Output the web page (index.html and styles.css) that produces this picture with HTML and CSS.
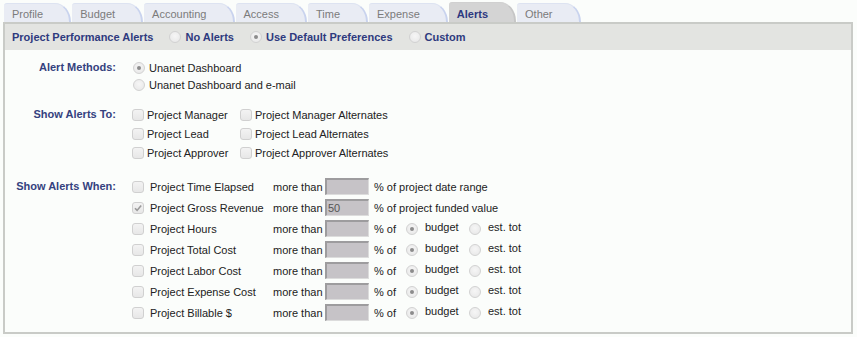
FILE: index.html
```html
<!DOCTYPE html>
<html>
<head>
<meta charset="utf-8">
<link rel="stylesheet" href="styles.css">
</head>
<body>
<div class="page">
  <nav class="tabs">
    <span class="tab">Profile</span>
    <span class="tab">Budget</span>
    <span class="tab">Accounting</span>
    <span class="tab">Access</span>
    <span class="tab">Time</span>
    <span class="tab">Expense</span>
    <span class="tab active">Alerts</span>
    <span class="tab">Other</span>
  </nav>
  <div class="panel">
    <div class="panel-head">
      <span class="head-title">Project Performance Alerts</span>
      <span class="head-opt"><span class="radio"></span>No Alerts</span>
      <span class="head-opt"><span class="radio on"></span>Use Default Preferences</span>
      <span class="head-opt"><span class="radio"></span>Custom</span>
    </div>
    <div class="panel-body">
      <div class="section methods">
        <div class="sec-label">Alert Methods:</div>
        <div class="sec-content">
          <div class="opt"><span class="radio on"></span>Unanet Dashboard</div>
          <div class="opt"><span class="radio"></span>Unanet Dashboard and e-mail</div>
        </div>
      </div>
      <div class="section to">
        <div class="sec-label">Show Alerts To:</div>
        <div class="sec-content to-grid">
          <div class="chk-opt"><span class="cbox"></span>Project Manager</div>
          <div class="chk-opt"><span class="cbox"></span>Project Manager Alternates</div>
          <div class="chk-opt"><span class="cbox"></span>Project Lead</div>
          <div class="chk-opt"><span class="cbox"></span>Project Lead Alternates</div>
          <div class="chk-opt"><span class="cbox"></span>Project Approver</div>
          <div class="chk-opt"><span class="cbox"></span>Project Approver Alternates</div>
        </div>
      </div>
      <div class="section when">
        <div class="sec-label">Show Alerts When:</div>
        <div class="sec-content">
          <div class="cond">
            <span class="cond-name"><span class="cbox"></span>Project Time Elapsed</span>
            <span class="more">more than</span>
            <span class="field"></span>
            <span class="suffix">% of project date range</span>
          </div>
          <div class="cond">
            <span class="cond-name"><span class="cbox checked"><svg viewBox="0 0 12 12" width="12" height="12"><path d="M3 6.2 L5.1 8.4 L9.2 3.4" fill="none" stroke="#9a9a9a" stroke-width="1.6"/></svg></span>Project Gross Revenue</span>
            <span class="more">more than</span>
            <span class="field">50</span>
            <span class="suffix">% of project funded value</span>
          </div>
          <div class="cond">
            <span class="cond-name"><span class="cbox"></span>Project Hours</span>
            <span class="more">more than</span>
            <span class="field"></span>
            <span class="pct">% of</span>
            <span class="radio on"></span><span class="rlabel budget">budget</span>
            <span class="radio"></span><span class="rlabel">est. tot</span>
          </div>
          <div class="cond">
            <span class="cond-name"><span class="cbox"></span>Project Total Cost</span>
            <span class="more">more than</span>
            <span class="field"></span>
            <span class="pct">% of</span>
            <span class="radio on"></span><span class="rlabel budget">budget</span>
            <span class="radio"></span><span class="rlabel">est. tot</span>
          </div>
          <div class="cond">
            <span class="cond-name"><span class="cbox"></span>Project Labor Cost</span>
            <span class="more">more than</span>
            <span class="field"></span>
            <span class="pct">% of</span>
            <span class="radio on"></span><span class="rlabel budget">budget</span>
            <span class="radio"></span><span class="rlabel">est. tot</span>
          </div>
          <div class="cond">
            <span class="cond-name"><span class="cbox"></span>Project Expense Cost</span>
            <span class="more">more than</span>
            <span class="field"></span>
            <span class="pct">% of</span>
            <span class="radio on"></span><span class="rlabel budget">budget</span>
            <span class="radio"></span><span class="rlabel">est. tot</span>
          </div>
          <div class="cond">
            <span class="cond-name"><span class="cbox"></span>Project Billable $</span>
            <span class="more">more than</span>
            <span class="field"></span>
            <span class="pct">% of</span>
            <span class="radio on"></span><span class="rlabel budget">budget</span>
            <span class="radio"></span><span class="rlabel">est. tot</span>
          </div>
        </div>
      </div>
    </div>
  </div>
</div>
</body>
</html>
```
FILE: styles.css
```css
html, body {
  margin: 0;
  padding: 0;
  background: #fbfdfb;
}
body {
  font-family: "Liberation Sans", Arial, sans-serif;
  font-size: 11px;
  color: #222;
}
.page {
  padding: 0 4px 3px 3px;
}
.tabs {
  display: flex;
  align-items: flex-end;
  gap: 1px;
  padding: 2px 0 0 1px;
  height: 22px;
  box-sizing: border-box;
}
.tab {
  height: 19px;
  box-sizing: border-box;
  padding: 2px 26px 0 8px;
  line-height: 16px;
  background: #e9ecf4;
  color: #7b7b7b;
  border-top: 1px solid #dde3f1;
  border-right: 2px solid #c9d3ee;
  border-top-left-radius: 3px;
  border-top-right-radius: 16px 19px;
}
.tab.active {
  height: 20px;
  padding-top: 3px;
  background: #d4d4d4;
  border-top-color: #d0d0d0;
  border-right-color: #c6c6c6;
  color: #2d3880;
  font-weight: bold;
}
.panel {
  height: 312px;
  box-sizing: border-box;
  border: 2px solid #c9cbc7;
  background: #fbfdfb;
}
.panel-head {
  height: 26px;
  background: #e3e4e1;
  display: flex;
  align-items: center;
  padding-left: 7px;
  font-weight: bold;
  color: #2e3a7e;
}
.head-opt {
  display: flex;
  align-items: center;
  gap: 4px;
  margin-left: 16px;
}
.radio {
  display: inline-block;
  flex: none;
  width: 12px;
  height: 12px;
  box-sizing: border-box;
  border-radius: 50%;
  border: 1px solid #d2d2d2;
  background: radial-gradient(circle at 50% 40%, #f6f6f6 0%, #e6e6e6 100%);
  position: relative;
}
.radio.on::after {
  content: "";
  position: absolute;
  left: 3px;
  top: 3px;
  width: 4px;
  height: 4px;
  border-radius: 50%;
  background: #8c8c8c;
}
.panel-body {
  padding-top: 9px;
}
.section {
  display: grid;
  grid-template-columns: 111px 1fr;
  column-gap: 16px;
}
.sec-label {
  text-align: right;
  font-weight: bold;
  color: #34417e;
}
.methods .sec-label { line-height: 17px; }
.to .sec-label { line-height: 19px; }
.when .sec-label { line-height: 21px; }
.methods {
  margin-bottom: 12px;
}
.to {
  margin-bottom: 14px;
}
.opt {
  height: 17px;
  display: flex;
  align-items: center;
  gap: 4px;
  padding-left: 1px;
}
.to-grid {
  display: grid;
  grid-template-columns: 108px auto;
  justify-content: start;
}
.chk-opt {
  height: 19px;
  display: flex;
  align-items: center;
  gap: 3px;
}
.cbox {
  display: inline-block;
  flex: none;
  width: 12px;
  height: 12px;
  box-sizing: border-box;
  border: 1px solid #d0d0d0;
  border-radius: 3px;
  background: linear-gradient(#f3f3f3, #e7e7e7);
  position: relative;
}
.cbox svg {
  position: absolute;
  left: -1px;
  top: -1px;
}
.cond {
  height: 21px;
  display: flex;
  align-items: center;
}
.cond-name {
  width: 141px;
  display: flex;
  align-items: center;
  gap: 6px;
}
.more {
  width: 52px;
}
.field {
  width: 44px;
  height: 17px;
  box-sizing: border-box;
  background: #c6c3c7;
  border-top: 2px solid #9d9c9e;
  border-left: 2px solid #9d9c9e;
  border-right: 1px solid #dcdcdc;
  border-bottom: 1px solid #dcdcdc;
  padding-left: 1px;
  line-height: 14px;
  color: #555;
  margin-right: 5px;
}
.pct {
  width: 32px;
}
.rlabel {
  margin-left: 7px;
  margin-bottom: 3px;
}
.rlabel.budget {
  width: 44px;
}
```
